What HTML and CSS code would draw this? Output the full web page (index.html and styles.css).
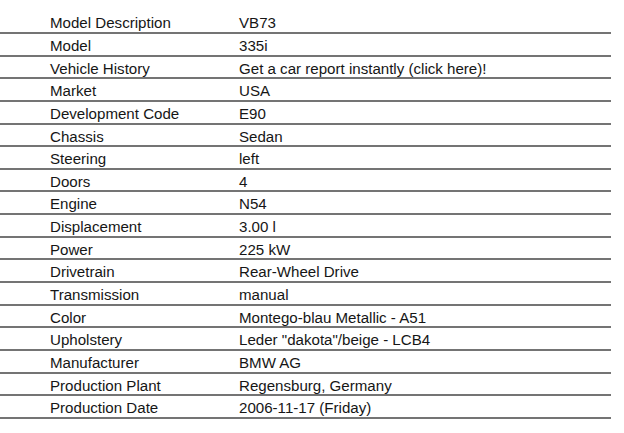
FILE: index.html
```html
<!DOCTYPE html>
<html>
<head>
<meta charset="utf-8">
<link rel="stylesheet" href="styles.css">
</head>
<body>
<div class="specs">
  <div class="row"><span class="label">Model Description</span><span class="value">VB73</span></div>
  <div class="row"><span class="label">Model</span><span class="value">335i</span></div>
  <div class="row"><span class="label">Vehicle History</span><span class="value">Get a car report instantly (click here)!</span></div>
  <div class="row"><span class="label">Market</span><span class="value">USA</span></div>
  <div class="row"><span class="label">Development Code</span><span class="value">E90</span></div>
  <div class="row"><span class="label">Chassis</span><span class="value">Sedan</span></div>
  <div class="row"><span class="label">Steering</span><span class="value">left</span></div>
  <div class="row"><span class="label">Doors</span><span class="value">4</span></div>
  <div class="row"><span class="label">Engine</span><span class="value">N54</span></div>
  <div class="row"><span class="label">Displacement</span><span class="value">3.00 l</span></div>
  <div class="row"><span class="label">Power</span><span class="value">225 kW</span></div>
  <div class="row"><span class="label">Drivetrain</span><span class="value">Rear-Wheel Drive</span></div>
  <div class="row"><span class="label">Transmission</span><span class="value">manual</span></div>
  <div class="row"><span class="label">Color</span><span class="value">Montego-blau Metallic - A51</span></div>
  <div class="row"><span class="label">Upholstery</span><span class="value">Leder "dakota"/beige - LCB4</span></div>
  <div class="row"><span class="label">Manufacturer</span><span class="value">BMW AG</span></div>
  <div class="row"><span class="label">Production Plant</span><span class="value">Regensburg, Germany</span></div>
  <div class="row"><span class="label">Production Date</span><span class="value">2006-11-17 (Friday)</span></div>
</div>
</body>
</html>
```
FILE: styles.css
```css
html, body {
  margin: 0;
  padding: 0;
  background: #ffffff;
}
body {
  padding-top: 11.3px;
  font-family: "Liberation Sans", Arial, sans-serif;
  font-size: 15.1px;
  color: #161616;
}
.specs {
  width: 611px;
  display: flex;
  flex-direction: column;
}
.row {
  box-sizing: border-box;
  height: 22.65px;
  padding-top: 4px;
  padding-left: 50px;
  line-height: 16.65px;
  border-bottom: 2px solid #747474;
  display: grid;
  grid-template-columns: 189px 1fr;
  white-space: nowrap;
}
```
